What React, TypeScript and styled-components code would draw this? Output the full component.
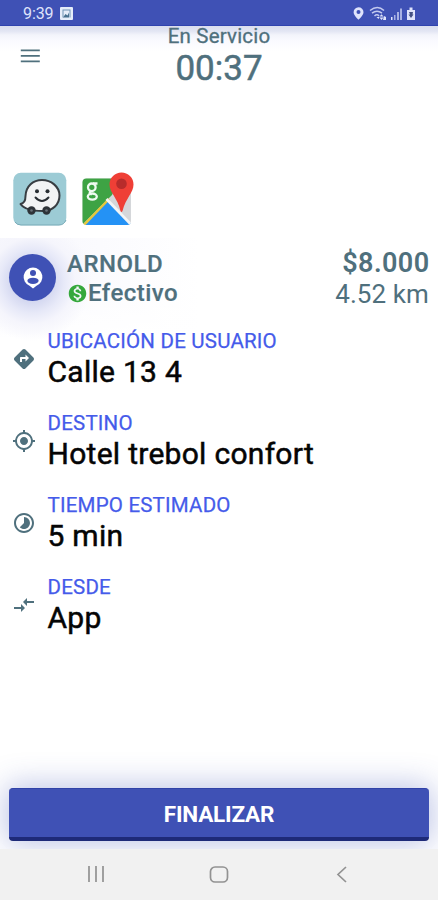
import React from "react";
import styled, { createGlobalStyle } from "styled-components";
import {
  MdCompareArrows,
  MdDirections,
  MdGpsFixed,
  MdMonetizationOn,
  MdTimelapse,
} from "react-icons/md";

const GlobalStyle = createGlobalStyle`
  *, *::before, *::after { box-sizing: border-box; }
  html, body { margin: 0; padding: 0; }
  body { font-family: Roboto, "Liberation Sans", sans-serif; background: #fff; }
`;

const slate = "#4f707d";
const indigo = "#3f51b5";

const Screen = styled.div`
  width: 438px;
  height: 900px;
  display: flex;
  flex-direction: column;
  overflow: hidden;
  background: #fff;
`;

const StatusBar = styled.div`
  height: 26px;
  flex: none;
  display: flex;
  align-items: center;
  justify-content: space-between;
  padding: 2px 21px 0 23px;
  background: ${indigo};
  border-bottom: 1px solid #3043ae;
  color: #dfe3fb;
`;

const StatusGroup = styled.div<{ $gap: number }>`
  display: flex;
  align-items: center;
  gap: ${(p) => p.$gap}px;
`;

const Clock = styled.span`
  font-size: 16px;
  line-height: 20px;
  letter-spacing: -0.1px;
`;

const Header = styled.header`
  height: 146px;
  flex: none;
  display: grid;
  grid-template-columns: 60px 1fr 60px;
  align-items: start;
  background: linear-gradient(#dadeee 0, #e2e5f3 5px, #f3f4fb 9px, #fafaff 15px, #fff 26px);
`;

const MenuButton = styled.button`
  margin: 22px 0 0 20px;
  padding: 0;
  width: 20px;
  height: 15px;
  border: 0;
  background: none;
  display: flex;
`;

const Timer = styled.div`
  display: flex;
  flex-direction: column;
  align-items: center;
  color: ${slate};
`;

const TimerLabel = styled.span`
  font-size: 20.5px;
  line-height: 20px;
  letter-spacing: 0.2px;
  -webkit-text-stroke: 0.3px ${slate};
`;

const TimerValue = styled.span`
  font-size: 35px;
  line-height: 46px;
  -webkit-text-stroke: 0.5px ${slate};
`;

const NavApps = styled.div`
  height: 66px;
  flex: none;
  display: flex;
  gap: 15px;
  padding-left: 13px;
`;

const Passenger = styled.section`
  height: 110px;
  margin-bottom: -21px;
  flex: none;
  display: flex;
  align-items: flex-start;
  padding: 12px 9px 0;
  background: radial-gradient(circle at 32px 43px, #d3d7f0 20px, #e7e9f8 32px, #f5f5fc 43px, rgba(255, 255, 255, 0) 60px),
    linear-gradient(rgba(255, 255, 255, 0) 40px, #fff 100px),
    linear-gradient(90deg, #f7f7fd, #fff 200px);
`;

const Avatar = styled.div`
  width: 47px;
  height: 47px;
  margin-top: 4px;
  border-radius: 50%;
  background: ${indigo};
  display: flex;
  align-items: center;
  justify-content: center;
`;

const Details = styled.div<{ $end?: boolean }>`
  display: flex;
  flex-direction: column;
  align-items: ${(p) => (p.$end ? "flex-end" : "flex-start")};
  margin-left: ${(p) => (p.$end ? "auto" : "11px")};
  color: ${slate};
`;

const Name = styled.span`
  font-size: 24px;
  font-weight: 500;
  line-height: 29px;
  letter-spacing: 0.5px;
  -webkit-text-stroke: 0.2px ${slate};
`;

const Payment = styled.span`
  display: flex;
  align-items: center;
  font-size: 24px;
  font-weight: 500;
  line-height: 29px;
  letter-spacing: 0.45px;
  -webkit-text-stroke: 0.2px ${slate};

  svg {
    stroke-width: 0;
  }
`;

const Price = styled.span`
  font-size: 27px;
  font-weight: 600;
  line-height: 26px;
  letter-spacing: 0.4px;
  margin-right: -0.5px;
`;

const Distance = styled.span`
  font-size: 26px;
  line-height: 36px;
  letter-spacing: 0.1px;
`;

const TripList = styled.main`
  flex: 1;
  display: flex;
  flex-direction: column;
`;

const TripRow = styled.div`
  height: 82px;
  display: grid;
  grid-template-columns: 48px 1fr;
`;

const RowIcon = styled.div`
  padding: 20px 0 0 12px;
  color: ${slate};
  line-height: 0;
`;

const RowLabel = styled.div`
  font-size: 20.5px;
  line-height: 28px;
  letter-spacing: 0.2px;
  margin-left: -0.5px;
  color: #455bea;
  -webkit-text-stroke: 0.25px #455bea;
`;

const RowValue = styled.div`
  font-size: 30px;
  line-height: 33px;
  letter-spacing: 0.28px;
  margin-left: -0.5px;
  color: #050505;
  -webkit-text-stroke: 0.5px #050505;
`;

const ActionArea = styled.footer`
  height: 101px;
  flex: none;
  padding: 40px 9px 0;
  overflow: hidden;
`;

const FinishButton = styled.button`
  display: block;
  width: 100%;
  height: 53px;
  padding: 2px 0 0;
  border: 0;
  border-top: 1px solid #3042a8;
  border-bottom: 4px solid #1e2a78;
  border-radius: 4px;
  background: ${indigo};
  color: #fff;
  font-family: inherit;
  font-size: 22.5px;
  font-weight: 700;
  letter-spacing: -0.2px;
  box-shadow: 0 0 30px 3px rgba(63, 81, 181, 0.34);
`;

const AndroidNav = styled.nav`
  height: 51px;
  flex: none;
  display: grid;
  grid-template-columns: repeat(3, 1fr);
  justify-items: center;
  padding: 17px 34px 0 34px;
  background: #f1f1f1;
`;

const WazeLogo = () => (
  <svg width="54" height="54" viewBox="0 0 54 54">
    <rect x=".3" y=".8" width="53" height="52.5" rx="7.5" fill="#9ccbd5" />
    <path d="M2 50q2 3 6 3h38q5 0 7-5" fill="none" stroke="#78aab7" strokeWidth="1" />
    <path
      d="M12.500 24C13 14 20 8 29 8s17.500 6.500 17.500 15.500C46.500 32 40 39 30 39c-9.800 0-18.500-1.200-22.500-7 3.600-.6 5-3 5-8z"
      fill="#f2f3f4" stroke="#383d42" strokeWidth="2" strokeLinejoin="round"
    />
    <circle cx="24" cy="19.200" r="2" fill="#292e33" />
    <circle cx="34.500" cy="19.200" r="2" fill="#292e33" />
    <path d="M22.500 25.500q6.500 7 13 0" fill="none" stroke="#292e33" strokeWidth="1.900" strokeLinecap="round" />
    <circle cx="18.500" cy="38.500" r="4.200" fill="#2e3338" />
    <circle cx="33.500" cy="38.500" r="4.200" fill="#2e3338" />
    <circle cx="18.500" cy="38.500" r="1.300" fill="#697178" />
    <circle cx="33.500" cy="38.500" r="1.300" fill="#697178" />
  </svg>
);

const MapsLogo = () => (
  <svg width="54" height="54" viewBox="0 0 54 54">
    <defs>
      <clipPath id="tile"><rect x=".5" y="6.500" width="48.500" height="46.500" rx="4" /></clipPath>
    </defs>
    <g clipPath="url(#tile)">
      <rect y="6" width="50" height="48" fill="#d5d7da" />
      <path d="M0 6h38l-8 17L0 53z" fill="#3ea344" />
      <path d="M2 54 25.500 27 51 54z" fill="#2492f5" />
      <path d="M1 54 27 27" stroke="#e6c83a" strokeWidth="2.400" />
      <path d="M24.500 27l25 26" stroke="#f3f5f6" strokeWidth="2.800" />
    </g>
    <g fill="none" stroke="#effaf0" strokeWidth="2.300">
      <circle cx="9.800" cy="15.300" r="3.800" />
      <path d="M11 11.500h4.500M9 19c-2.500 1.800-1 3 .8 3.400" />
      <ellipse cx="10.300" cy="24.600" rx="4.500" ry="3.100" />
    </g>
    <path d="M39.500.5a12 12 0 0 1 12 12c0 8-7.500 13.200-11 26.500q-1 2-2 0c-3-13.300-11-18.500-11-26.500a12 12 0 0 1 12-12z" fill="#ef3f36" />
    <circle cx="39.500" cy="11.700" r="5.300" fill="#b72c2b" />
  </svg>
);

const rows = [
  { Icon: MdDirections, label: "UBICACIÓN DE USUARIO", value: "Calle 13 4" },
  { Icon: MdGpsFixed, label: "DESTINO", value: "Hotel trebol confort" },
  { Icon: MdTimelapse, label: "TIEMPO ESTIMADO", value: "5 min" },
  { Icon: MdCompareArrows, label: "DESDE", value: "App" },
];

export default function App() {
  return (
    <Screen>
      <GlobalStyle />
      <StatusBar>
        <StatusGroup $gap={7}>
          <Clock>9:39</Clock>
          <svg width="13" height="13" viewBox="0 0 13 13">
            <rect width="13" height="13" rx="1" fill="#e5edf9" />
            <path d="M2.500 2.500h8v8h-1v-7h-6v7h-1z" fill="#6f93b4" />
            <path d="M3 10.500 5.500 7l2 1.500L9 5.500v5z" fill="#47718f" />
          </svg>
        </StatusGroup>
        <svg width="64" height="16" viewBox="0 0 64 16" fill="#dfe3fb">
          <path fillRule="evenodd" d="M5.500 1.200A5 5 0 0 0 .6 6.200c0 3.200 4.900 7.500 4.900 7.500s5-4.300 5-7.500a5 5 0 0 0-5-5zm0 2.800a2 2 0 1 1 0 4 2 2 0 0 1 0-4z" />
          <g fill="none" stroke="#c3caef" strokeWidth="1.500">
            <path d="M17 4.500q7.500-6 14 0M19 7.200q5-4 10 0M21.500 10q2.500-2.300 4.500 0" />
          </g>
          <path d="M23.500 11l2 2 1-2zM26.500 10.500l2-2.300 2 2.300zM26.500 11.500h4l-2 2.500zM31 10l2 1v3h-3z" />
          <path d="M38 11h1.500v3H38z" />
          <path d="M41 9h1.500v5H41zM44 6h2v8h-2zM47 2.500h2V14h-2z" fill="#a8b1e4" />
          <path d="M54 4h2.500V1.500h3V4H62v10h-8z" />
          <path d="M56 6h4l-.5 2.500h1L58 12l-2.500-3.500H57z" fill="#445183" />
        </svg>
      </StatusBar>

      <Header>
        <MenuButton aria-label="Menú">
          <svg width="20" height="15" viewBox="0 0 20 15" stroke={slate} strokeWidth="1.800">
            <path d="M.8 2.300h19M.8 7.800h19M.8 13.300h19" />
          </svg>
        </MenuButton>
        <Timer>
          <TimerLabel>En Servicio</TimerLabel>
          <TimerValue>00:37</TimerValue>
        </Timer>
      </Header>

      <NavApps>
        <WazeLogo />
        <MapsLogo />
      </NavApps>

      <Passenger>
        <Avatar>
          <svg width="22" height="24" viewBox="0 0 22 24">
            <path d="M11 1.500a9.500 9.500 0 0 1 3.500 18.300L11 22.500l-3.500-2.700A9.500 9.500 0 0 1 11 1.500z" fill="#fff" />
            <circle cx="11" cy="7" r="3" fill={indigo} />
            <ellipse cx="11" cy="14.800" rx="5.600" ry="3.100" fill={indigo} />
          </svg>
        </Avatar>
        <Details>
          <Name>ARNOLD</Name>
          <Payment><MdMonetizationOn size={21} color="#35a83c" />Efectivo</Payment>
        </Details>
        <Details $end>
          <Price>$8.000</Price>
          <Distance>4.52 km</Distance>
        </Details>
      </Passenger>

      <TripList>
        {rows.map(({ Icon, label, value }) => (
          <TripRow key={label}>
            <RowIcon><Icon size={24} /></RowIcon>
            <div>
              <RowLabel>{label}</RowLabel>
              <RowValue>{value}</RowValue>
            </div>
          </TripRow>
        ))}
      </TripList>

      <ActionArea>
        <FinishButton>FINALIZAR</FinishButton>
      </ActionArea>

      <AndroidNav>
        <svg width="18" height="17" viewBox="0 0 18 17" stroke="#929292" strokeWidth="1.700">
          <path d="M2 0v16M9 0v16M16 0v16" />
        </svg>
        <svg width="20" height="18" viewBox="0 0 20 18" fill="none" stroke="#929292" strokeWidth="1.700">
          <rect x="1.500" y="1" width="17" height="15" rx="4.500" />
        </svg>
        <svg width="14" height="17" viewBox="0 0 14 17" fill="none" stroke="#929292" strokeWidth="1.700">
          <path d="M11 1 3 8.500l8 7.500" />
        </svg>
      </AndroidNav>
    </Screen>
  );
}
